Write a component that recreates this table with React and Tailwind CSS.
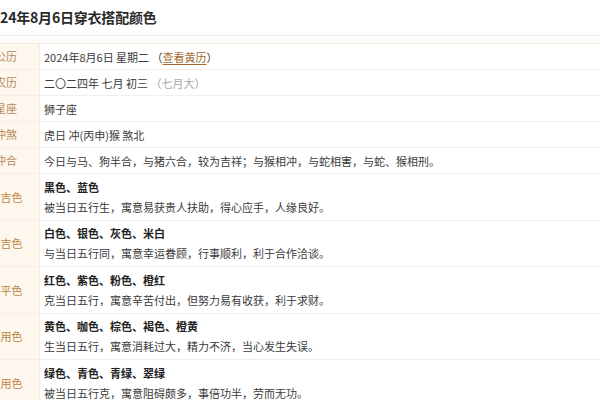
const rows = [
  { label: '公历', content: 'solar' },
  { label: '农历', content: 'lunar' },
  { label: '星座', text: '狮子座' },
  { label: '冲煞', text: '虎日 冲(丙申)猴 煞北' },
  { label: '冲合', text: '今日与马、狗半合，与猪六合，较为吉祥；与猴相冲，与蛇相害，与蛇、猴相刑。' },
];

const colors = [
  { label: '大吉色', title: '黑色、蓝色', desc: '被当日五行生，寓意易获贵人扶助，得心应手，人缘良好。' },
  { label: '次吉色', title: '白色、银色、灰色、米白', desc: '与当日五行同，寓意幸运眷顾，行事顺利，利于合作洽谈。' },
  { label: '中平色', title: '红色、紫色、粉色、橙红', desc: '克当日五行，寓意辛苦付出，但努力易有收获，利于求财。' },
  { label: '慎用色', title: '黄色、咖色、棕色、褐色、橙黄', desc: '生当日五行，寓意消耗过大，精力不济，当心发生失误。' },
  { label: '忌用色', title: '绿色、青色、青绿、翠绿', desc: '被当日五行克，寓意阻碍颇多，事倍功半，劳而无功。' },
];

function Cell({ row }) {
  if (row.content === 'solar') {
    return (
      <span>
        2024年8月6日 星期二 （<span className="text-[#a5692f] underline underline-offset-2">查看黄历</span>）
      </span>
    );
  }
  if (row.content === 'lunar') {
    return (
      <span>
        二〇二四年 七月 初三 <span className="text-[#a8a8a8]">（七月大）</span>
      </span>
    );
  }
  return <span>{row.text}</span>;
}

export default function App() {
  return (
    <div
      className="w-[600px] h-[400px] overflow-hidden bg-white text-[#3a3a3a]"
      style={{ fontFamily: '"Noto Sans CJK SC", "Noto Sans", sans-serif' }}
    >
      <div className="-ml-[27px] w-[660px]">
        {/* 标题 */}
        <div className="h-[36px] flex items-center pl-[11px] border-b border-[#ececec]">
          <h1 className="text-[14px] font-bold text-[#2a2a2a] tracking-[-0.2px]">2024年8月6日穿衣搭配颜色</h1>
        </div>
        <div className="h-[7px] bg-[#fefcf8]" />

        {/* 表格 */}
        <div className="border-t border-[#f1eadb] text-[11px]">
          {rows.map((row) => (
            <div key={row.label} className="flex h-[26px] border-b border-[#f3efe7]">
              <div className="w-[67px] shrink-0 flex items-center justify-center bg-[#fdf7ed] text-[#b98a5a] border-r border-[#f3eadb]">
                {row.label}
              </div>
              <div className="flex-1 flex items-center pl-[4px] leading-[20px] whitespace-nowrap">
                <Cell row={row} />
              </div>
            </div>
          ))}
          {colors.map((c) => (
            <div key={c.label} className="flex h-[46.5px] border-b border-[#f3efe7]">
              <div className="w-[67px] shrink-0 flex items-center justify-center bg-[#fdf7ed] text-[#bf8648] border-r border-[#f3eadb]">
                {c.label}
              </div>
              <div className="flex-1 flex flex-col justify-center pl-[4px] leading-[20px] whitespace-nowrap">
                <p className="font-bold text-[#222]">{c.title}</p>
                <p>{c.desc}</p>
              </div>
            </div>
          ))}
        </div>
      </div>
    </div>
  );
}
